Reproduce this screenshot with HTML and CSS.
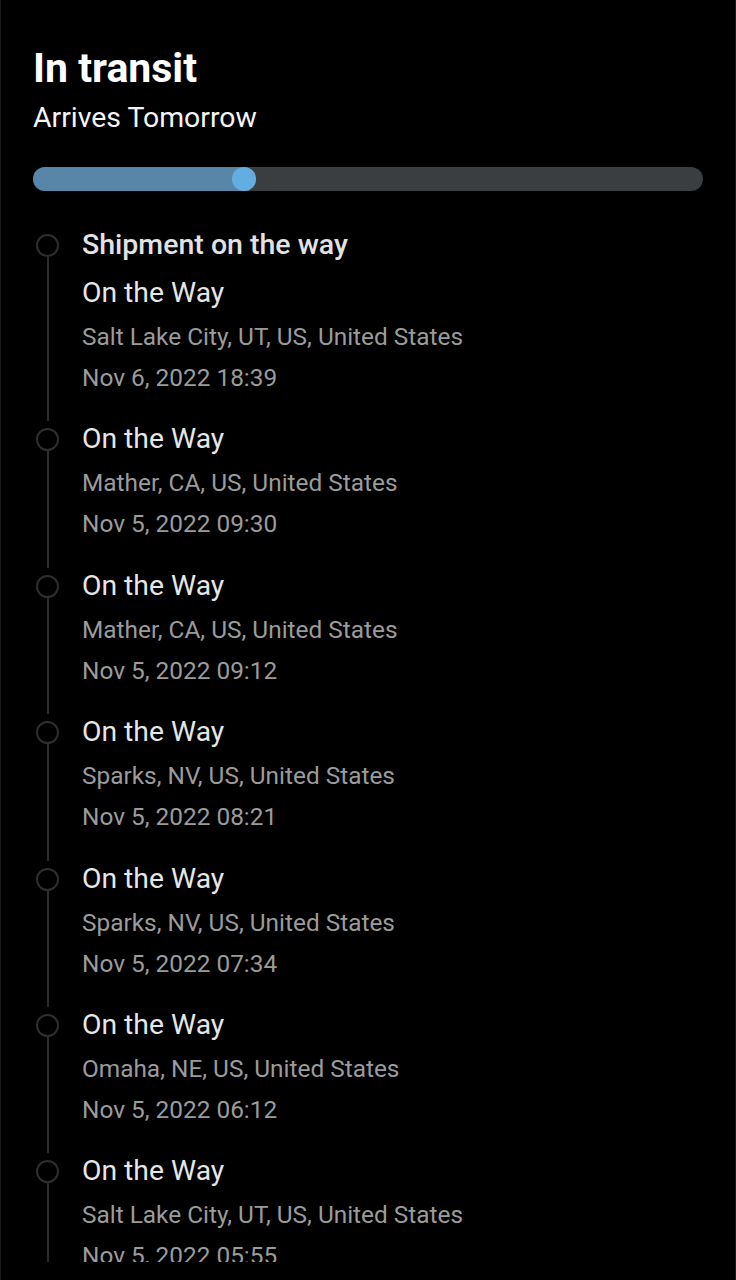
FILE: index.html
```html
<!DOCTYPE html>
<html lang="en">
<head>
    <meta charset="UTF-8">
    <meta name="viewport" content="width=device-width, initial-scale=1.0">
    <title>Tracking</title>
    <link rel="stylesheet" href="styles.css">
</head>
<body>
    <div class="screen">
        <div class="scroll">
            <h1 class="status">In transit</h1>
            <p class="eta">Arrives Tomorrow</p>

            <div class="progress">
                <div class="progress-fill" style="width: 33.3%">
                    <span class="progress-knob"></span>
                </div>
            </div>

            <div class="timeline">
                <div class="event">
                    <div class="rail"><span class="dot"></span><span class="stem"></span></div>
                    <div class="event-body">
                        <div class="event-heading">Shipment on the way</div>
                        <div class="event-title first">On the Way</div>
                        <div class="event-place">Salt Lake City, UT, US, United States</div>
                        <div class="event-time">Nov 6, 2022 18:39</div>
                    </div>
                </div>
                <div class="event">
                    <div class="rail"><span class="dot"></span><span class="stem"></span></div>
                    <div class="event-body">
                        <div class="event-title">On the Way</div>
                        <div class="event-place">Mather, CA, US, United States</div>
                        <div class="event-time">Nov 5, 2022 09:30</div>
                    </div>
                </div>
                <div class="event">
                    <div class="rail"><span class="dot"></span><span class="stem"></span></div>
                    <div class="event-body">
                        <div class="event-title">On the Way</div>
                        <div class="event-place">Mather, CA, US, United States</div>
                        <div class="event-time">Nov 5, 2022 09:12</div>
                    </div>
                </div>
                <div class="event">
                    <div class="rail"><span class="dot"></span><span class="stem"></span></div>
                    <div class="event-body">
                        <div class="event-title">On the Way</div>
                        <div class="event-place">Sparks, NV, US, United States</div>
                        <div class="event-time">Nov 5, 2022 08:21</div>
                    </div>
                </div>
                <div class="event">
                    <div class="rail"><span class="dot"></span><span class="stem"></span></div>
                    <div class="event-body">
                        <div class="event-title">On the Way</div>
                        <div class="event-place">Sparks, NV, US, United States</div>
                        <div class="event-time">Nov 5, 2022 07:34</div>
                    </div>
                </div>
                <div class="event">
                    <div class="rail"><span class="dot"></span><span class="stem"></span></div>
                    <div class="event-body">
                        <div class="event-title">On the Way</div>
                        <div class="event-place">Omaha, NE, US, United States</div>
                        <div class="event-time">Nov 5, 2022 06:12</div>
                    </div>
                </div>
                <div class="event">
                    <div class="rail"><span class="dot"></span><span class="stem"></span></div>
                    <div class="event-body">
                        <div class="event-title">On the Way</div>
                        <div class="event-place">Salt Lake City, UT, US, United States</div>
                        <div class="event-time">Nov 5, 2022 05:55</div>
                    </div>
                </div>
            </div>
        </div>
    </div>
</body>
</html>
```

FILE: styles.css
```css
body {
    margin: 0;
    background-color: #000;
    font-family: Roboto, "Liberation Sans", sans-serif;
    color: #fff;
}
.screen {
    height: 1280px;
    border-left: 1px solid #1c1c1c;
    border-right: 1px solid #1c1c1c;
    box-sizing: border-box;
}
.scroll {
    height: 1262px;
    overflow: hidden;
    padding: 44px 32px 0 32px;
    box-sizing: border-box;
}
.status {
    margin: 0;
    font-size: 41px;
    line-height: 48px;
    font-weight: 700;
}
.eta {
    margin: 8px 0 0 0;
    font-size: 28.4px;
    line-height: 36px;
    color: #f5f5f5;
}
.progress {
    display: flex;
    height: 24px;
    margin-top: 31px;
    border-radius: 12px;
    background-color: #3a3e41;
}
.progress-fill {
    display: flex;
    justify-content: flex-end;
    border-radius: 12px;
    background-color: #5786a8;
}
.progress-knob {
    width: 24px;
    height: 24px;
    border-radius: 50%;
    background-color: #64ade0;
}
.timeline {
    margin-top: 36px;
}
.event {
    display: flex;
}
.rail {
    display: flex;
    flex-direction: column;
    align-items: center;
    width: 27px;
    margin-left: 1px;
    flex-shrink: 0;
}
.dot {
    width: 23px;
    height: 23px;
    margin-top: 7px;
    border: 2px solid #2e2e2e;
    border-radius: 50%;
    box-sizing: border-box;
}
.stem {
    flex: 1;
    width: 2px;
    background-color: #2c2c2c;
}
.event-body {
    margin-left: 21px;
    padding-bottom: 26.4px;
}
.event-heading {
    font-size: 28.5px;
    line-height: 36px;
    font-weight: 500;
    color: #e2e2e2;
}
.event-title {
    font-size: 28.3px;
    line-height: 36px;
    color: #e6e6e6;
}
.event-title.first {
    margin-top: 12px;
}
.event-place {
    margin-top: 9px;
    font-size: 24.4px;
    line-height: 34px;
    color: #9b9b9b;
}
.event-time {
    margin-top: 7px;
    font-size: 24.4px;
    line-height: 34px;
    color: #9b9b9b;
}
```
